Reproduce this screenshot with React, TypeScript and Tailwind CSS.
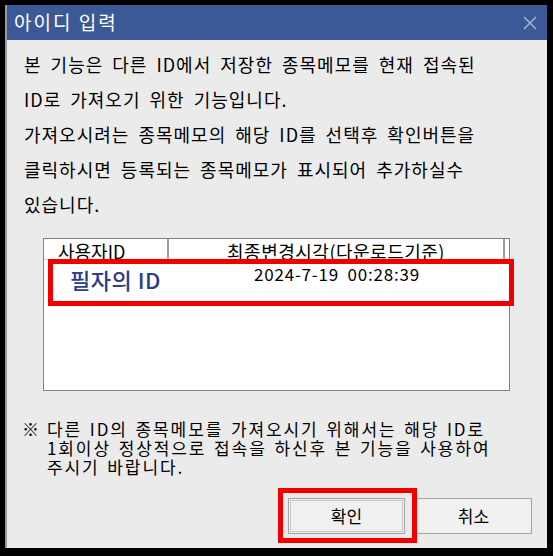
const font = { fontFamily: '"Noto Sans CJK KR", "Noto Sans", sans-serif' };

function CloseIcon() {
  return (
    <svg width="14" height="14" viewBox="0 0 14 14" className="block">
      <path d="M1 1 L13 13 M13 1 L1 13" stroke="#a9b9d9" strokeWidth="1.4" />
    </svg>
  );
}

function Button({ label, focused }: { label: string; focused?: boolean }) {
  return (
    <button
      className={`w-[117px] h-[36px] bg-[#f0f0f0] border border-[#a5a5a5] text-[17px] text-black flex items-center justify-center ${
        focused ? 'outline outline-1 outline-[#c8c8c8] -outline-offset-[3px]' : ''
      }`}
    >
      {label}
    </button>
  );
}

export default function App() {
  return (
    <div
      className="w-[553px] h-[556px] bg-black pt-[5px] pl-[5px] pr-[6px] pb-[8px] overflow-hidden"
      style={font}
    >
      <div className="w-full h-full flex flex-col bg-[#ebebeb] border-l-2 border-[#9a9a9a]">
        {/* title bar */}
        <div className="h-[35px] bg-[#3c5997] flex items-center justify-between pl-[7px] pr-[10px] shrink-0">
          <span className="text-white text-[19px] tracking-[2px]">아이디 입력</span>
          <CloseIcon />
        </div>

        {/* description */}
        <div className="pt-[7px] pl-[17px] text-[18px] leading-[35px] text-black tracking-[1px] [word-spacing:4px]">
          <p>본 기능은 다른 ID에서 저장한 종목메모를 현재 접속된</p>
          <p>ID로 가져오기 위한 기능입니다.</p>
          <p>가져오시려는 종목메모의 해당 ID를 선택후 확인버튼을</p>
          <p>클릭하시면 등록되는 종목메모가 표시되어 추가하실수</p>
          <p>있습니다.</p>
        </div>

        {/* id list */}
        <div className="relative mt-[16px] ml-[36px] w-[467px] h-[153px] bg-white border border-[#828282] shrink-0">
          <div className="flex h-[21px] overflow-hidden border-b border-[#d0d0d0] text-[18px] leading-[24px] text-black">
            <div className="w-[125px] pl-[14px] border-r-2 border-[#a0a0a0] whitespace-nowrap">사용자ID</div>
            <div className="w-[336px] text-center border-r-2 border-[#a0a0a0] whitespace-nowrap tracking-[0.5px]">
              최종변경시각(다운로드기준)
            </div>
            <div className="flex-1" />
          </div>
          <div className="flex items-start h-[40px]">
            <div className="w-[125px] pl-[26px] pt-[3px] text-[22px] font-medium text-[#2c3d8c] whitespace-nowrap tracking-[0.5px]">
              필자의 ID
            </div>
            <div className="w-[336px] text-center text-[17px] pt-[1px] text-black tracking-[0.8px] [word-spacing:4px]">
              2024-7-19 00:28:39
            </div>
          </div>
          <div className="absolute left-[4px] top-[20px] w-[466px] h-[47px] border-[5px] border-[#f20000]" />
        </div>

        {/* note */}
        <div className="flex mt-[28px] pl-[15px] text-[17px] leading-[19px] text-black">
          <span className="w-[25px] shrink-0">※</span>
          <div className="tracking-[1.9px] [word-spacing:2px]">
            <p>다른 ID의 종목메모를 가져오시기 위해서는 해당 ID로</p>
            <p>1회이상 정상적으로 접속을 하신후 본 기능을 사용하여</p>
            <p>주시기 바랍니다.</p>
          </div>
        </div>

        {/* buttons */}
        <div className="flex justify-end gap-[10px] pr-[15px] mt-auto mb-[14px]">
          <div className="relative">
            <Button label="확인" focused />
            <div className="absolute -left-[10px] -top-[10px] w-[139px] h-[55px] border-[5px] border-[#f20000]" />
          </div>
          <Button label="취소" />
        </div>
      </div>
    </div>
  );
}
